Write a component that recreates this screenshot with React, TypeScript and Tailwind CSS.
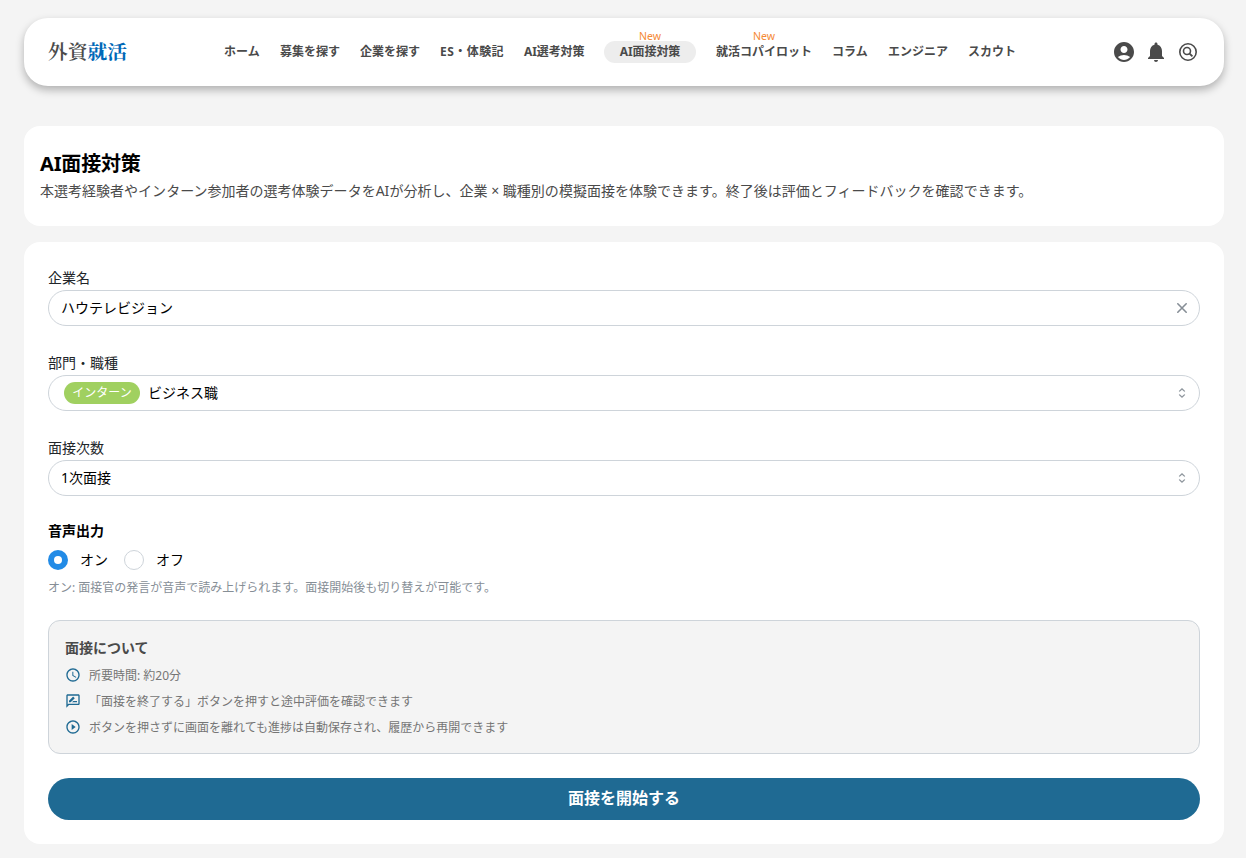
import type { ReactNode } from "react";
import {
  MdAccountCircle,
  MdNotifications,
  MdAccessTime,
  MdOutlineRateReview,
  MdPlayCircleOutline,
} from "react-icons/md";

const navItems = [
  { label: "ホーム", width: "w-[36px]" },
  { label: "募集を探す", width: "w-[60px]" },
  { label: "企業を探す", width: "w-[60px]" },
  { label: "ES・体験記", width: "w-[64px] tracking-[0.45px]" },
  { label: "AI選考対策", width: "w-[60px] tracking-[-0.1px]" },
  { label: "AI面接対策", width: "w-[92px] tracking-[-0.1px]", isNew: true, active: true },
  { label: "就活コパイロット", width: "w-[96px]", isNew: true },
  { label: "コラム", width: "w-[36px]" },
  { label: "エンジニア", width: "w-[60px]" },
  { label: "スカウト", width: "w-[48px]" },
];

function SearchCircle() {
  return (
    <svg width="20" height="20" viewBox="0 0 20 20" fill="none" stroke="#4a4a4a">
      <circle cx="10" cy="10" r="8.2" strokeWidth="1.6" />
      <circle cx="9" cy="9" r="3.5" strokeWidth="1.6" />
      <path d="M11.6 11.6L14.4 14.4" strokeWidth="1.9" />
    </svg>
  );
}

function Selector() {
  return (
    <svg width="16" height="16" viewBox="0 0 15 15" fill="#868e96" stroke="#868e96" strokeWidth="0.25">
      <path
        fillRule="evenodd"
        clipRule="evenodd"
        d="M4.93179 5.43179C4.75605 5.60753 4.75605 5.89245 4.93179 6.06819C5.10753 6.24392 5.39245 6.24392 5.56819 6.06819L7.49999 4.13638L9.43179 6.06819C9.60753 6.24392 9.89245 6.24392 10.0682 6.06819C10.2439 5.89245 10.2439 5.60753 10.0682 5.43179L7.81819 3.18179C7.73379 3.0974 7.61933 3.04999 7.49999 3.04999C7.38064 3.04999 7.26618 3.0974 7.18179 3.18179L4.93179 5.43179ZM10.0682 9.56819C10.2439 9.39245 10.2439 9.10753 10.0682 8.93179C9.89245 8.75606 9.60753 8.75606 9.43179 8.93179L7.49999 10.8636L5.56819 8.93179C5.39245 8.75606 5.10753 8.75606 4.93179 8.93179C4.75605 9.10753 4.75605 9.39245 4.93179 9.56819L7.18179 11.8182C7.35753 11.9939 7.64245 11.9939 7.81819 11.8182L10.0682 9.56819Z"
      />
    </svg>
  );
}

function Clear() {
  return (
    <svg width="16" height="16" viewBox="0 0 16 16" fill="none" stroke="#868e96" strokeWidth="1.6" strokeLinecap="round">
      <path d="M3.8 3.8L12.2 12.2M12.2 3.8L3.8 12.2" />
    </svg>
  );
}

function Field({ label, icon, children }: { label: string; icon: ReactNode; children: ReactNode }) {
  return (
    <div className="mb-6 h-[61px] pt-px">
      <div className="h-6 text-sm leading-6 text-[#212529]">{label}</div>
      <div className="flex h-9 items-center justify-between rounded-full border border-[#ced4da] pr-[9px] pl-3 text-sm text-black">
        <div className="flex items-center">{children}</div>
        {icon}
      </div>
    </div>
  );
}

export default function App() {
  return (
    <div className="min-h-[858px] w-full bg-[#f4f4f4] pr-[22px] pl-6 pt-[18px] font-['Noto_Sans','Noto_Sans_CJK_JP',sans-serif]">
      <header className="flex h-[68px] items-center rounded-3xl bg-white pr-6 pl-6 shadow-[0_4px_8px_rgba(0,0,0,0.28)]">
        <div className="w-[176px] font-['Liberation_Serif','Noto_Serif_CJK_JP','Noto_Sans_CJK_JP',serif] text-[19.8px] leading-7 font-semibold text-[#4a4a4a]">
          外資<span className="font-bold text-[#0068b7]">就活</span>
        </div>
        <nav className="flex gap-5 text-xs font-bold whitespace-nowrap text-[#4a4a4a]">
          {navItems.map((n) => (
            <a
              key={n.label}
              className={`relative flex h-[22px] shrink-0 items-center ${n.width} ${
                n.active ? "justify-center rounded-full bg-[#ededed]" : ""
              }`}
            >
              {n.isNew && (
                <span className="absolute inset-x-0 -top-[12px] text-center text-[10.5px] leading-[14px] font-normal tracking-normal text-[#f58a35]">
                  New
                </span>
              )}
              {n.label}
            </a>
          ))}
        </nav>
        <div className="ml-auto flex items-center gap-2 text-[#4a4a4a]">
          <MdAccountCircle size={24} />
          <MdNotifications size={24} />
          <span className="flex size-6 items-center justify-center">
            <SearchCircle />
          </span>
        </div>
      </header>

      <section className="mt-10 h-[100px] rounded-2xl bg-white px-4 pt-6">
        <h1 className="text-xl leading-7 font-bold tracking-[-0.15px] text-black">AI面接対策</h1>
        <p className="text-sm leading-[26px] tracking-[0.015px] text-[#4a4a4a]">
          本選考経験者やインターン参加者の選考体験データをAIが分析し、企業 × 職種別の模擬面接を体験できます。終了後は評価とフィードバックを確認できます。
        </p>
      </section>

      <main className="mt-4 h-[602px] rounded-2xl bg-white px-6 pt-[23px]">
        <Field label="企業名" icon={<Clear />}>
          ハウテレビジョン
        </Field>
        <Field label="部門・職種" icon={<Selector />}>
          <span className="mr-2 ml-[3px] flex h-[22px] w-[76px] items-center justify-center rounded-full bg-[#a0d060] text-xs text-white">
            インターン
          </span>
          ビジネス職
        </Field>
        <Field label="面接次数" icon={<Selector />}>
          1次面接
        </Field>

        <div className="text-sm leading-[22px] font-bold text-black">音声出力</div>
        <div className="mt-2 flex h-5 items-center text-sm text-black">
          <span className="flex size-5 items-center justify-center rounded-full bg-[#228be6]">
            <span className="size-2 rounded-full bg-white" />
          </span>
          <span className="ml-3">オン</span>
          <span className="ml-4 size-5 rounded-full border border-[#ced4da]" />
          <span className="ml-3">オフ</span>
        </div>
        <p className="mt-2 text-xs leading-5 text-[#868e96]">
          オン: 面接官の発言が音声で読み上げられます。面接開始後も切り替えが可能です。
        </p>

        <div className="mt-[22px] h-[134px] rounded-xl border border-[#ced4da] bg-[#f4f4f4] px-4 pt-4">
          <h2 className="mb-[4px] text-sm leading-[22px] font-bold text-[#4a4a4a]">面接について</h2>
          <ul className="text-xs text-[#757575]">
            <li className="flex h-[26px] items-center gap-2">
              <MdAccessTime size={16} color="#1f6a93" className="mb-0.5" />
              所要時間: 約20分
            </li>
            <li className="flex h-[26px] items-center gap-2">
              <MdOutlineRateReview size={16} color="#1f6a93" className="mb-0.5" />
              「面接を終了する」ボタンを押すと途中評価を確認できます
            </li>
            <li className="flex h-[26px] items-center gap-2">
              <MdPlayCircleOutline size={16} color="#1f6a93" className="mb-0.5" />
              ボタンを押さずに画面を離れても進捗は自動保存され、履歴から再開できます
            </li>
          </ul>
        </div>

        <button className="mt-6 flex h-[42px] w-full items-center justify-center rounded-full bg-[#1f6a93] pb-0.5 text-base font-bold text-white">
          面接を開始する
        </button>
      </main>
    </div>
  );
}
